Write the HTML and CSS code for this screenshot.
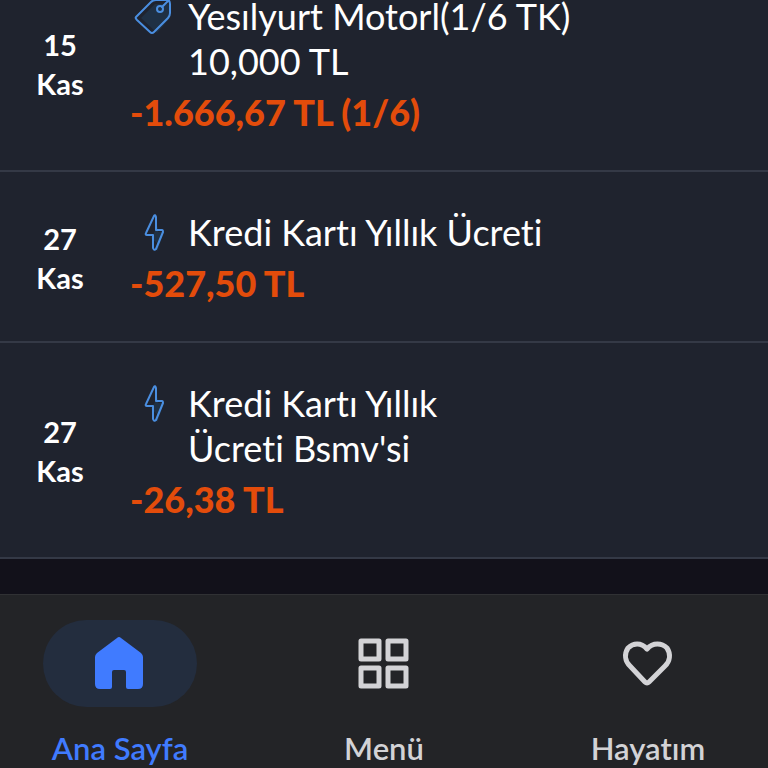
FILE: index.html
```html
<!DOCTYPE html>
<html lang="tr">
<head>
    <meta charset="UTF-8">
    <meta name="viewport" content="width=device-width, initial-scale=1.0">
    <title>Kart Hareketleri</title>
    <link rel="stylesheet" href="styles.css">
</head>
<body>

<main>
    <ul class="transactions">
        <li class="transaction">
            <div class="date">15<br>Kas</div>
            <div class="details">
                <div class="title">
                    <svg class="icon" viewBox="0 0 48 45" aria-hidden="true">
                        <path class="icon-fill" d="M11 24 25 10H37Q40 10 40 13V24L27 39Z"/>
                        <path d="M6 23 21 8Q23 6 26 6H36Q40 6 40 10V19Q40 22 38 24L24 38Q22 40 20 38L7 26Q5 24 6 23Z"/>
                        <circle cx="30" cy="15" r="3"/>
                        <path d="M32 13 42 3"/>
                    </svg>
                    <span>Yesılyurt Motorl(1/6 TK)<br>10,000 TL</span>
                </div>
                <div class="amount">-1.666,67 TL (1/6)</div>
            </div>
        </li>
        <li class="transaction">
            <div class="date">27<br>Kas</div>
            <div class="details">
                <div class="title">
                    <svg class="icon" viewBox="0 0 48 45" aria-hidden="true">
                        <path class="icon-fill" d="M21 28 28 16V22H34L27 42V33Z"/>
                        <path d="M24 6 16 23Q15 25 17 25H23V38Q24 41 26 39L33 22Q33 20 32 20H26V7Q25 4 24 6Z"/>
                    </svg>
                    <span>Kredi Kartı Yıllık Ücreti</span>
                </div>
                <div class="amount">-527,50 TL</div>
            </div>
        </li>
        <li class="transaction">
            <div class="date">27<br>Kas</div>
            <div class="details">
                <div class="title">
                    <svg class="icon" viewBox="0 0 48 45" aria-hidden="true">
                        <path class="icon-fill" d="M21 28 28 16V22H34L27 42V33Z"/>
                        <path d="M24 6 16 23Q15 25 17 25H23V38Q24 41 26 39L33 22Q33 20 32 20H26V7Q25 4 24 6Z"/>
                    </svg>
                    <span>Kredi Kartı Yıllık<br>Ücreti Bsmv'si</span>
                </div>
                <div class="amount">-26,38 TL</div>
            </div>
        </li>
    </ul>
</main>

<nav class="tab-bar">
    <a class="tab active" href="#ana-sayfa">
        <span class="tab-icon">
            <svg viewBox="0 0 54 54" aria-hidden="true">
                <path fill="currentColor" d="M24 1Q26-1 28 1L48 16Q50 18 50 20V47Q50 52 45 52H35Q33 52 33 50V35Q33 33 31 33H21Q19 33 19 35V50Q19 52 17 52H7Q2 52 2 47V20Q2 18 4 16Z"/>
            </svg>
        </span>
        Ana Sayfa
    </a>
    <a class="tab" href="#menu">
        <span class="tab-icon">
            <svg viewBox="0 0 54 54" aria-hidden="true">
                <g fill="none" stroke="currentColor" stroke-width="5" stroke-linejoin="round">
                    <rect x="4" y="4" width="18" height="18"/>
                    <rect x="31" y="4" width="18" height="18"/>
                    <rect x="4" y="31" width="18" height="18"/>
                    <rect x="31" y="31" width="18" height="18"/>
                </g>
            </svg>
        </span>
        Menü
    </a>
    <a class="tab" href="#hayatim">
        <span class="tab-icon">
            <svg viewBox="0 0 54 54" aria-hidden="true">
                <path fill="none" stroke="currentColor" stroke-width="5" stroke-linejoin="round" d="M26 12C20 5 12 6 7 11C3 17 4 24 9 29L24 45Q26 47 28 45L44 29C49 24 50 17 46 11C41 6 32 5 26 12Z"/>
            </svg>
        </span>
        Hayatım
    </a>
</nav>

</body>
</html>
```
FILE: styles.css
```css
* {
    box-sizing: border-box;
}

body {
    font-family: Lato, "Liberation Sans", sans-serif;
    font-variant-ligatures: none;
    background-color: #232427;
    color: #fff;
    margin: 0;
    height: 100vh;
    overflow: hidden;
}

main {
    background-color: #12111a;
    padding-bottom: 35px;
}

/* the list is scrolled part way through its first row */
.transactions {
    list-style: none;
    margin: -44px 0 0;
    padding: 0;
}

.transaction {
    display: flex;
    align-items: center;
    background-color: #1f232e;
    border-bottom: 2px solid #343946;
}

.date {
    width: 120px;
    padding-top: 2px;
    font-size: 29px;
    font-weight: bold;
    line-height: 39px;
    text-align: center;
}

.details {
    flex: 1;
    padding: 38px 24px 29px 10px;
}

.title {
    display: flex;
    gap: 10px;
    font-size: 36px;
    line-height: 45px;
}

.icon {
    flex: none;
    width: 48px;
    height: 45px;
    overflow: visible;
    fill: none;
    stroke: #4a8ee0;
    stroke-width: 2;
    stroke-linecap: round;
    stroke-linejoin: round;
}

.icon-fill {
    fill: #1f3044;
    stroke: none;
}

.amount {
    color: #e34c0b;
    font-size: 36px;
    font-weight: 900;
    line-height: 57px;
}

.tab-bar {
    display: flex;
    justify-content: space-between;
    background-color: #232427;
    border-top: 1px solid #303134;
    padding: 25px 43px 0;
}

.tab {
    display: flex;
    flex-direction: column;
    align-items: center;
    gap: 21px;
    width: 154px;
    color: #d3d3d6;
    font-size: 31px;
    font-weight: 600;
    line-height: 40px;
    text-decoration: none;
    white-space: nowrap;
}

.tab-icon {
    display: flex;
    align-items: center;
    justify-content: center;
    width: 100%;
    height: 87px;
    border-radius: 44px;
}

.tab-icon svg {
    width: 54px;
    height: 54px;
}

.active {
    color: #407bff;
}

.active .tab-icon {
    background-color: #232d3e;
}
```
